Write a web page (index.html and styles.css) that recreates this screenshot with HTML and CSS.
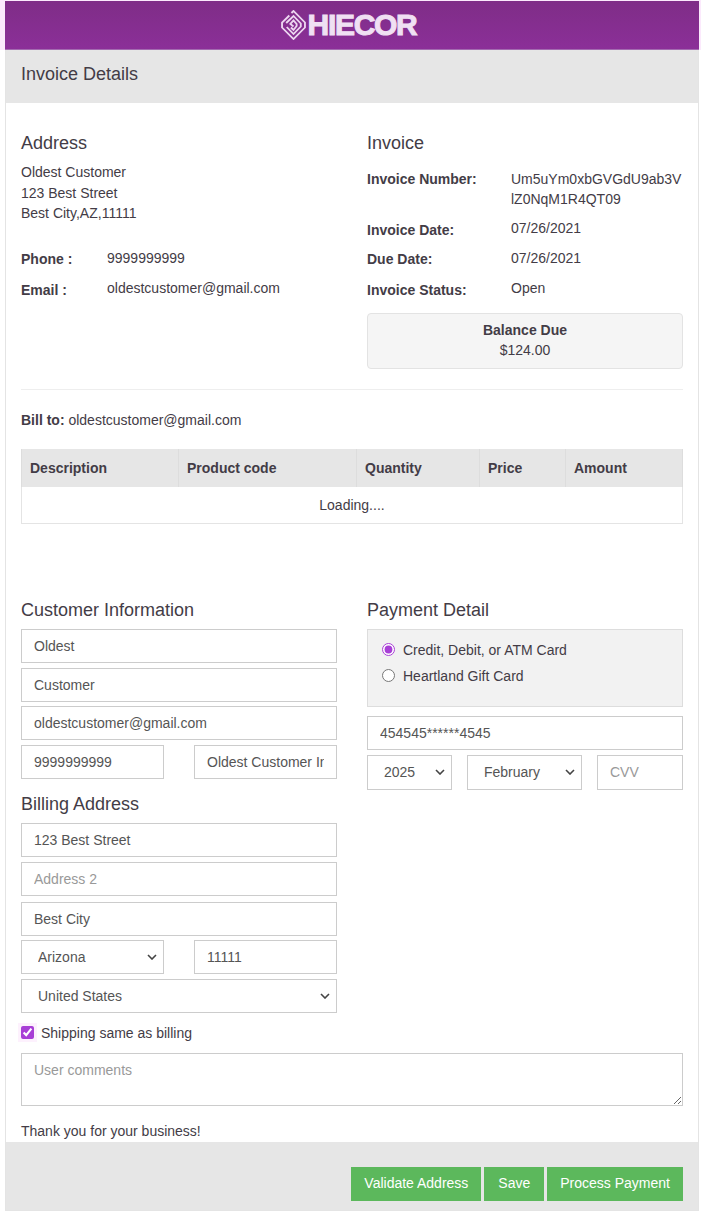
FILE: index.html
```html
<!DOCTYPE html>
<html lang="en">
<head>
<meta charset="utf-8">
<title>Invoice Details</title>
<link rel="stylesheet" href="styles.css">
</head>
<body>
<div class="page">
  <header class="brand">
    <svg class="logo-mark" viewBox="0 0 24 30" width="25" height="30" preserveAspectRatio="none" aria-hidden="true">
      <g fill="none" stroke="#ecd6f0" stroke-width="1.8">
        <path d="M10 3 12 1 23 12.500 23 17.500 12 29 1 17.500 1 12.500 8 5.500"/>
        <path d="M5 13 12 6 19 13.500 19 16.500 12 24 5.500 17"/>
        <path d="M9.500 17.500 12 20 15 16 15 14 12 10.500 9 14 12 16.500"/>
      </g>
    </svg>
    <span class="logo-text">HIECOR</span>
  </header>
  <div class="panel">
    <div class="panel-heading">Invoice Details</div>
    <div class="panel-body">
      <div class="two-col info">
        <section>
          <h3 class="title">Address</h3>
          <p class="address">Oldest Customer<br>123 Best Street<br>Best City,AZ,11111</p>
          <dl class="contact">
            <div class="row phone"><dt>Phone :</dt><dd>9999999999</dd></div>
            <div class="row email"><dt>Email :</dt><dd>oldestcustomer@gmail.com</dd></div>
          </dl>
        </section>
        <section>
          <h3 class="title">Invoice</h3>
          <dl class="invoice">
            <div class="row number"><dt>Invoice Number:</dt><dd>Um5uYm0xbGVGdU9ab3VlZ0NqM1R4QT09</dd></div>
            <div class="row low"><dt>Invoice Date:</dt><dd>07/26/2021</dd></div>
            <div class="row"><dt>Due Date:</dt><dd>07/26/2021</dd></div>
            <div class="row low"><dt>Invoice Status:</dt><dd>Open</dd></div>
          </dl>
          <div class="balance"><strong>Balance Due</strong><br>$124.00</div>
        </section>
      </div>
      <hr class="rule">
      <p class="bill"><strong>Bill to:</strong> oldestcustomer@gmail.com</p>
      <table class="items">
        <thead>
          <tr><th class="c1">Description</th><th class="c2">Product code</th><th class="c3">Quantity</th><th class="c4">Price</th><th class="c5">Amount</th></tr>
        </thead>
        <tbody>
          <tr><td colspan="5">Loading....</td></tr>
        </tbody>
      </table>
      <div class="two-col forms">
        <section>
          <h3 class="title form-title">Customer Information</h3>
          <div class="stack">
            <input class="field" value="Oldest">
            <input class="field g5" value="Customer">
            <input class="field g4" value="oldestcustomer@gmail.com">
            <div class="pair g5">
              <input class="field" value="9999999999">
              <input class="field" value="Oldest Customer Inc">
            </div>
          </div>
          <h3 class="title form-title billing">Billing Address</h3>
          <div class="stack">
            <input class="field" value="123 Best Street">
            <input class="field g5" placeholder="Address 2">
            <input class="field g6" value="Best City">
            <div class="pair g4">
              <select class="field"><option>Arizona</option></select>
              <input class="field" value="11111">
            </div>
            <select class="field g5"><option>United States</option></select>
          </div>
        </section>
        <section>
          <h3 class="title form-title pay-title">Payment Detail</h3>
          <div class="methods">
            <label class="method"><input type="radio" name="pay" checked>Credit, Debit, or ATM Card</label>
            <label class="method"><input type="radio" name="pay">Heartland Gift Card</label>
          </div>
          <input class="field card" value="454545******4545">
          <div class="expiry">
            <select class="field"><option>2025</option></select>
            <select class="field"><option>February</option></select>
            <input class="field" placeholder="CVV">
          </div>
        </section>
      </div>
      <label class="same"><input type="checkbox" checked>Shipping same as billing</label>
      <textarea class="comments" placeholder="User comments"></textarea>
      <p class="thanks">Thank you for your business!</p>
    </div>
    <div class="panel-footer">
      <button class="btn" type="button">Validate Address</button>
      <button class="btn btn-save" type="button">Save</button>
      <button class="btn" type="button">Process Payment</button>
    </div>
  </div>
</div>
</body>
</html>
```

FILE: styles.css
```css
* { box-sizing: border-box; }
html, body { margin: 0; padding: 0; }
body {
  background: #fff;
  color: #433c46;
  font: 14px/20px "Liberation Sans", Arial, sans-serif;
  width: 701px;
}
.page {
  background: linear-gradient(to bottom, #fbe9fc 0, #fbe9fc 50px, #fff 50px);
  padding: 1px 2px 0 5px;
  height: 1212px;
  overflow: hidden;
}
.brand {
  height: 49px;
  background: linear-gradient(to bottom, #7f2d87, #8b2f98);
  display: flex;
  align-items: center;
  justify-content: center;
  gap: 2px;
  padding-right: 7px;
  border-bottom: 1px solid #a36ab0;
}
.logo-mark { display: block; }
.logo-text {
  color: #f0e0f3;
  font-weight: 700;
  font-size: 30px;
  line-height: 30px;
  letter-spacing: -1.3px;
  -webkit-text-stroke: 1px #f0e0f3;
}
.panel {
  border: 1px solid #e4e4e4;
  border-width: 0 1px 1px 1px;
  background: #fff;
}
.panel-heading {
  background: #e6e6e6;
  height: 53px;
  padding: 14px 15px 0;
  font-size: 18px;
  line-height: 20px;
  color: #433c46;
}
.panel-body { padding: 0 15px; height: 1039px; }
.two-col { display: grid; grid-template-columns: 316px 316px; column-gap: 30px; }
.title { margin: 0; font-weight: 400; font-size: 18px; line-height: 20px; color: #433c46; }
.info { height: 286px; padding-top: 30px; }
.address { margin: 9px 0 0; line-height: 20.5px; }
dl { margin: 0; }
dt { font-weight: 700; margin: 0; }
dd { margin: 0; }
.row { display: flex; }
.contact { margin-top: 24px; }
.contact dt { width: 86px; position: relative; top: 1px; }
.contact .email { margin-top: 10px; }
.contact .email dt { top: 2px; }
.invoice { margin-top: 16px; }
.invoice dt { width: 144px; flex: none; position: relative; top: 1px; }
.invoice dd { width: 172px; overflow-wrap: anywhere; }
.invoice .row + .row { margin-top: 10px; }
.invoice .number dt { top: 0; }
.invoice .low dt { top: 2px; }
.invoice .number + .row { margin-top: 9px; }
.balance {
  margin-top: 15px;
  height: 56px;
  padding: 6px 0;
  background: #f5f5f5;
  border: 1px solid #e3e3e3;
  border-radius: 4px;
  text-align: center;
}
.rule { border: 0; border-top: 1px solid #eee; margin: 0; }
.bill { margin: 20px 0 0; }
.items {
  width: 662px;
  margin-top: 19px;
  border-collapse: collapse;
  table-layout: fixed;
}
.items th {
  background: #e6e6e6;
  height: 38px;
  padding: 0 8px;
  text-align: left;
  border-left: 1px solid #ddd;
  border-right: 1px solid #ddd;
}
.c1 { width: 157px; }
.c2 { width: 178px; }
.c3 { width: 123px; }
.c4 { width: 86px; }
.items td {
  height: 36px;
  text-align: center;
  border: 1px solid #e4e4e4;
  border-top: 0;
}
.forms { margin-top: 76px; }
.form-title { height: 20px; }
.forms section > .form-title:first-child { margin-bottom: 9px; }
.billing { margin: 15px 0 9px; }
.stack { display: flex; flex-direction: column; }
.field {
  display: block;
  width: 100%;
  height: 34px;
  margin: 0;
  padding: 0 12px;
  background: #fff;
  border: 1px solid #ccc;
  border-radius: 0;
  color: #555;
  font: 14px/20px "Liberation Sans", Arial, sans-serif;
  outline: 0;
}
select.field {
  appearance: none;
  -webkit-appearance: none;
  padding: 0 20px 0 16px;
  background: #fff url("data:image/svg+xml,%3Csvg xmlns='http://www.w3.org/2000/svg' width='10' height='6'%3E%3Cpath d='M1 1l4 4 4-4' fill='none' stroke='%23444' stroke-width='1.6'/%3E%3C/svg%3E") no-repeat right 6px center;
}
.field::placeholder { color: #999; opacity: 1; }
.g4 { margin-top: 4px; }
.g5 { margin-top: 5px; }
.g6 { margin-top: 6px; }
.pair { display: grid; grid-template-columns: 143px 143px; column-gap: 30px; }
.methods {
  height: 78px;
  padding: 10px 14px;
  background: #f2f2f2;
  border: 1px solid #ddd;
}
.method { display: flex; align-items: center; height: 20px; }
.method + .method { margin-top: 6px; }
.method input { width: 13px; height: 13px; margin: 0 8px 0 0; accent-color: #a83fd6; }
.card { margin-top: 9px; }
.expiry { display: grid; grid-template-columns: 85px 115px 86px; column-gap: 15px; margin-top: 5px; }
.expiry .field { height: 35px; }
.same { display: flex; align-items: center; height: 20px; margin-top: 10px; }
.same input {
  width: 13px;
  height: 13px;
  margin: 0 7px 0 0;
  accent-color: #a83fd6;
  box-shadow: 0 0 0 3px #fdf1fd;
}
.comments {
  display: block;
  width: 662px;
  height: 53px;
  margin: 10px 0 0;
  padding: 6px 12px;
  border: 1px solid #ccc;
  border-radius: 0;
  color: #555;
  font: 14px/20px "Liberation Sans", Arial, sans-serif;
}
.comments::placeholder { color: #999; opacity: 1; }
.thanks { margin: 15px 0 0; }
.panel-footer {
  background: #e6e6e6;
  height: 68px;
  padding: 25px 15px 0;
  display: flex;
  justify-content: flex-end;
  gap: 3px;
}
.btn {
  height: 34px;
  padding: 0 13px 2px;
  background: #5cb85c;
  border: 0;
  border-radius: 0;
  color: #fff;
  font: 14px/20px "Liberation Sans", Arial, sans-serif;
}
.btn-save { padding: 0 14px 2px; }
```
